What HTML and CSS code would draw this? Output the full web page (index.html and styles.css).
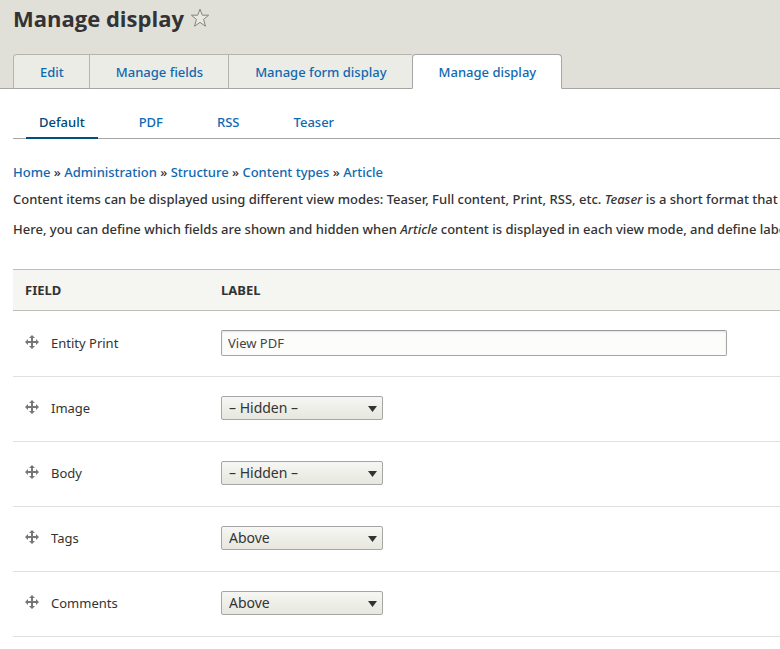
FILE: index.html
```
<!DOCTYPE html>
<html lang="en">
<head>
    <meta charset="UTF-8">
    <meta name="viewport" content="width=device-width, initial-scale=1.0">
    <title>Manage display</title>
    <link rel="stylesheet" href="styles.css">
</head>
<body>
    <svg width="0" height="0" class="sprite">
        <symbol id="move" viewBox="0 0 14 14">
            <path d="M7 2v10M2 7h10" fill="none" stroke="#777" stroke-width="2"/>
            <path d="M7 0l3 3H4zM7 14l3-3H4zM0 7l3-3v6zM14 7l-3-3v6z" fill="#777"/>
        </symbol>
    </svg>
    <header class="content-header">
        <div class="title-row">
            <h1 class="page-title">Manage display</h1>
            <button class="shortcut" type="button" aria-label="Add to shortcuts">
                <svg width="20" height="20" viewBox="0 0 20 20">
                    <path d="M10 1.200l2.300 6h6.300l-5 4.200 1.900 6.800-5.500-3.800-5.500 3.800 1.900-6.800-5-4.200h6.300z" fill="#e9e9e2" stroke="#85857b" stroke-linejoin="round"/>
                </svg>
            </button>
        </div>
        <nav class="tabs">
            <a href="#" class="tab">Edit</a>
            <a href="#" class="tab">Manage fields</a>
            <a href="#" class="tab">Manage form display</a>
            <a href="#" class="tab active">Manage display</a>
        </nav>
    </header>
    <main class="content">
        <nav class="subtabs">
            <a href="#" class="subtab active">Default</a>
            <a href="#" class="subtab">PDF</a>
            <a href="#" class="subtab">RSS</a>
            <a href="#" class="subtab">Teaser</a>
        </nav>
        <nav class="breadcrumb">
            <a href="#">Home</a> » <a href="#">Administration</a> » <a href="#">Structure</a> » <a href="#">Content types</a> » <a href="#">Article</a>
        </nav>
        <div class="help">
            <p>Content items can be displayed using different view modes: Teaser, Full content, Print, RSS, etc. <em>Teaser</em> is a short format that</p>
            <p>Here, you can define which fields are shown and hidden when <em>Article</em> content is displayed in each view mode, and define labels</p>
        </div>
        <table class="fields">
            <thead>
                <tr>
                    <th class="field-col">Field</th>
                    <th>Label</th>
                </tr>
            </thead>
            <tbody>
                <tr>
                    <td><div class="field"><svg class="handle"><use href="#move"/></svg><label for="entity-print">Entity Print</label></div></td>
                    <td><input type="text" class="text-input" id="entity-print" value="View PDF"></td>
                </tr>
                <tr>
                    <td><div class="field"><svg class="handle"><use href="#move"/></svg><label for="image">Image</label></div></td>
                    <td><select class="select" id="image"><option>Above</option><option selected>– Hidden –</option></select></td>
                </tr>
                <tr>
                    <td><div class="field"><svg class="handle"><use href="#move"/></svg><label for="body">Body</label></div></td>
                    <td><select class="select" id="body"><option>Above</option><option selected>– Hidden –</option></select></td>
                </tr>
                <tr>
                    <td><div class="field"><svg class="handle"><use href="#move"/></svg><label for="tags">Tags</label></div></td>
                    <td><select class="select" id="tags"><option selected>Above</option><option>– Hidden –</option></select></td>
                </tr>
                <tr>
                    <td><div class="field"><svg class="handle"><use href="#move"/></svg><label for="comments">Comments</label></div></td>
                    <td><select class="select" id="comments"><option selected>Above</option><option>– Hidden –</option></select></td>
                </tr>
            </tbody>
        </table>
    </main>
</body>
</html>
```
FILE: styles.css
```
* {
    box-sizing: border-box;
}

body {
    margin: 0;
    background-color: #fff;
    color: #333;
    font-family: "Noto Sans", "Open Sans", sans-serif;
    font-size: 13px;
    line-height: 20px;
}

a {
    color: #0f69b0;
    text-decoration: none;
}

a:hover {
    text-decoration: underline;
}

.sprite {
    display: block;
}

.content-header {
    background-color: #e0e0d8;
    padding: 4px 0 0 13px;
    border-bottom: 1px solid #a6a6a6;
}

.title-row {
    display: flex;
    align-items: center;
    gap: 6px;
    height: 28px;
    margin-bottom: 22px;
}

.page-title {
    margin: 0;
    font-family: "Open Sans", sans-serif;
    font-size: 22px;
    line-height: 28px;
}

.shortcut {
    display: flex;
    padding: 0;
    border: 0;
    background: none;
    cursor: pointer;
}

/* tabs overlap the header border so the active one opens into the page */
.tabs {
    display: flex;
    margin-bottom: -1px;
}

.tab {
    height: 35px;
    padding: 7px 25px 7px 26px;
    border: 1px solid #b5b5b0;
    border-right-width: 0;
    border-bottom-color: #a6a6a6;
    background-color: #ecece7;
    font-weight: 500;
}

.tab:first-child {
    border-top-left-radius: 4px;
}

.tab.active {
    border: 1px solid #a6a6a6;
    border-bottom-color: #fff;
    border-radius: 4px 4px 0 0;
    background-color: #fff;
}

.content {
    padding-left: 13px;
    overflow: hidden;
}

.subtabs {
    display: flex;
    gap: 28px;
    margin: 16px 0 23px;
    padding-left: 13px;
    border-bottom: 1px solid #a6a6a6;
}

.subtab {
    height: 34px;
    margin-bottom: -1px;
    padding: 7px 13px;
    font-weight: 500;
}

.subtab.active {
    border-bottom: 2px solid #004f80;
    color: #004875;
}

.breadcrumb,
.help {
    font-weight: 500;
}

.breadcrumb {
    margin-bottom: 7px;
}

.help p {
    margin: 0 0 10px;
    white-space: nowrap;
}

.fields {
    width: 100%;
    margin-top: 30px;
    border-collapse: collapse;
    table-layout: fixed;
}

.fields th {
    height: 41px;
    padding: 0 12px;
    border: solid #bfbfba;
    border-width: 1px 0;
    background-color: #f5f5f2;
    text-align: left;
    text-transform: uppercase;
}

.fields .field-col {
    width: 196px;
}

.fields td {
    height: 65px;
    padding: 0 12px 2px;
    border-bottom: 1px solid #e0e0dc;
}

.fields tbody tr:first-child td {
    height: 66px;
}

.field {
    display: flex;
    align-items: center;
    gap: 12px;
}

.handle {
    width: 14px;
    height: 14px;
    margin-bottom: 2px;
}

.text-input,
.select {
    display: block;
    border: 1px solid #a6a6a6;
    border-radius: 2px;
    color: #444;
    font-family: inherit;
}

.text-input {
    width: 100%;
    max-width: 506px;
    height: 26px;
    padding: 0 6px;
    border-top-color: #999;
    background-color: #fcfcfa;
    box-shadow: inset 0 1px 2px rgba(0, 0, 0, 0.1);
    font-size: 13px;
}

.select {
    appearance: none;
    width: 162px;
    height: 24px;
    padding: 0 24px 2px 7px;
    background: url("data:image/svg+xml,%3Csvg xmlns='http://www.w3.org/2000/svg' width='9' height='6'%3E%3Cpath d='M0 0h9L4.500 6z' fill='%23333'/%3E%3C/svg%3E") no-repeat right 5px top 9px, linear-gradient(#f6f6f3, #e7e7df);
    color: #333;
    font-size: 14px;
}
```
